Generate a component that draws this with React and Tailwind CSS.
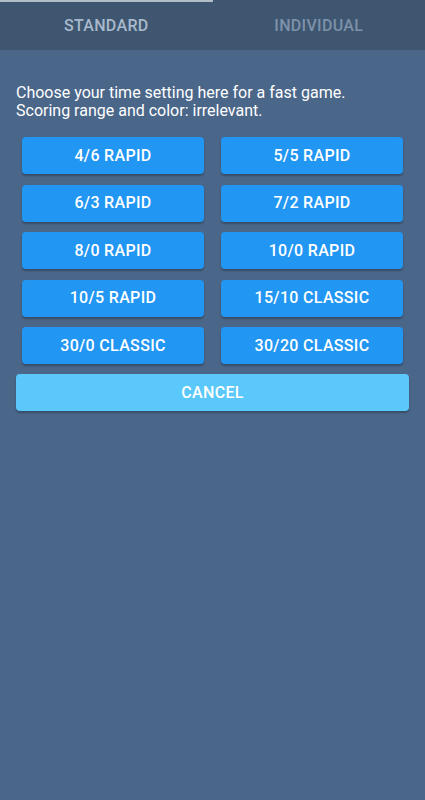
import React from 'react';

const presets = [
  '4/6 RAPID',
  '5/5 RAPID',
  '6/3 RAPID',
  '7/2 RAPID',
  '8/0 RAPID',
  '10/0 RAPID',
  '10/5 RAPID',
  '15/10 CLASSIC',
  '30/0 CLASSIC',
  '30/20 CLASSIC',
];

const Tab = ({ label, active }) => (
  <div className="flex flex-1 flex-col">
    <div className={`h-[2px] ${active ? 'bg-[#b4bec8]' : 'bg-transparent'}`} />
    <div
      className={`flex h-[48px] items-center justify-center text-[16px] font-medium tracking-[0.02em] ${
        active ? 'text-[#a9b9cc]' : 'text-[#7d92aa]'
      }`}
    >
      {label}
    </div>
  </div>
);

export default function App() {
  return (
    <div
      className="flex min-h-[800px] flex-col bg-[#4a6689]"
      style={{ fontFamily: 'Roboto, "Noto Sans", sans-serif' }}
    >
      <div className="flex bg-[#3e5670]">
        <Tab label="STANDARD" active />
        <Tab label="INDIVIDUAL" />
      </div>

      <div className="px-4 pt-[34px]">
        <p className="text-[16px] leading-[18px] text-white">
          Choose your time setting here for a fast game.
          <br />
          Scoring range and color: irrelevant.
        </p>

        <div className="mt-[17px] grid grid-cols-2 gap-x-[17px] gap-y-[10.5px] px-[6px]">
          {presets.map((p) => (
            <button
              key={p}
              className="h-[37px] rounded-[4px] bg-[#2196f3] text-[16px] font-medium tracking-[0.02em] text-white shadow-[0_2px_2px_rgba(0,0,0,0.25)]"
            >
              {p}
            </button>
          ))}
        </div>

        <button className="mt-[10px] h-[37px] w-full rounded-[4px] bg-[#5ac8fa] text-[16px] font-medium tracking-[0.02em] text-white shadow-[0_2px_2px_rgba(0,0,0,0.25)]">
          CANCEL
        </button>
      </div>
    </div>
  );
}
